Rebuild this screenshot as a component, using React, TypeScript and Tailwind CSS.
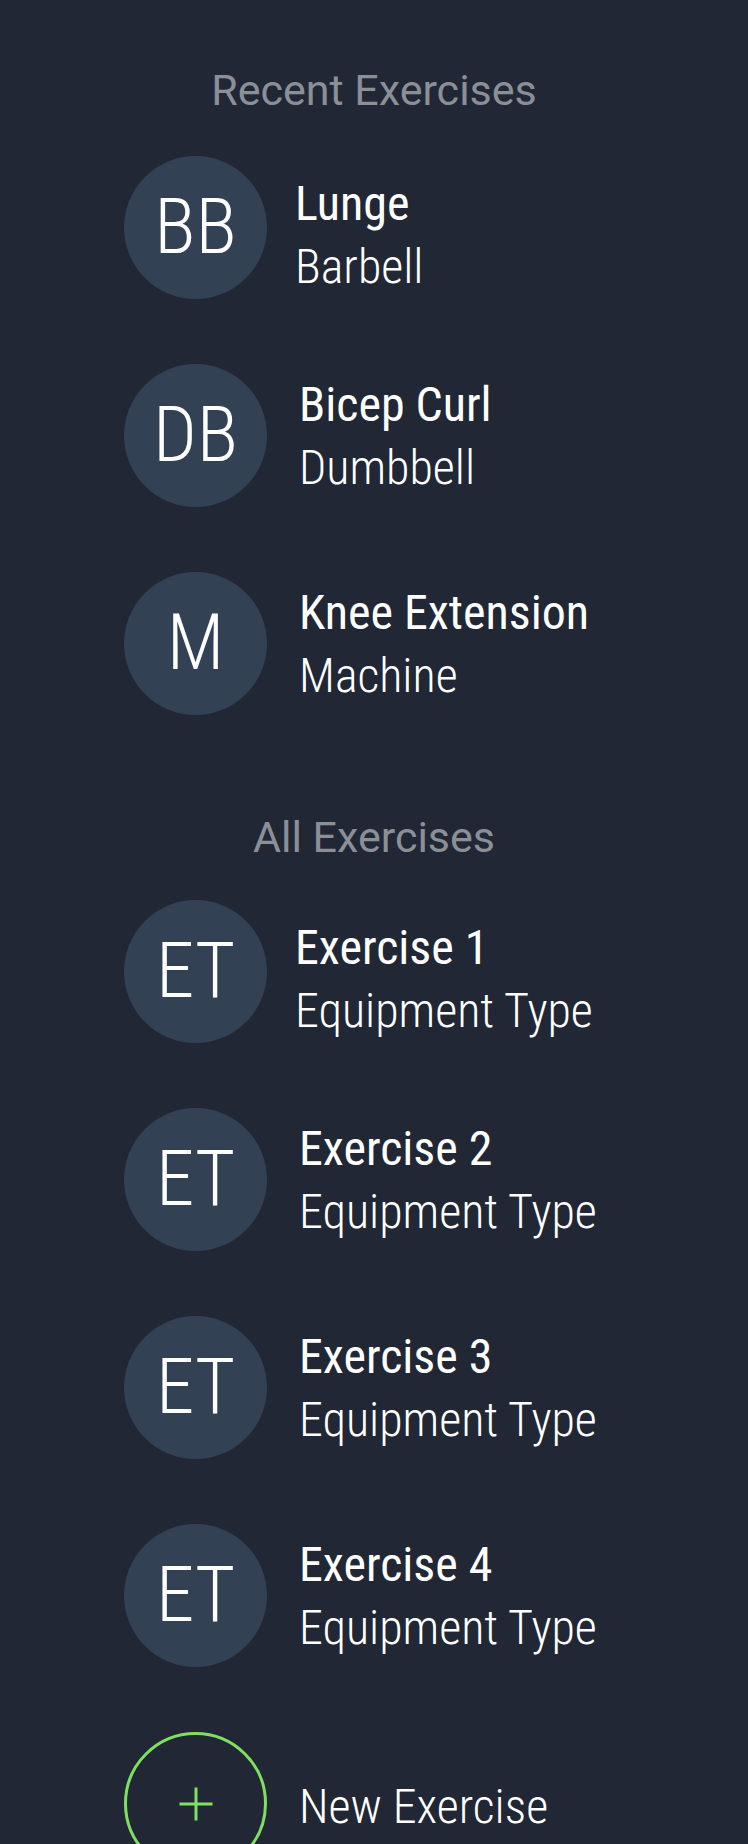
import React from "react";

type Item = { initials: string; name: string; sub: string; first?: boolean };

const recent: Item[] = [
  { initials: "BB", name: "Lunge", sub: "Barbell", first: true },
  { initials: "DB", name: "Bicep Curl", sub: "Dumbbell" },
  { initials: "M", name: "Knee Extension", sub: "Machine" },
];

const all: Item[] = [
  { initials: "ET", name: "Exercise 1", sub: "Equipment Type", first: true },
  { initials: "ET", name: "Exercise 2", sub: "Equipment Type" },
  { initials: "ET", name: "Exercise 3", sub: "Equipment Type" },
  { initials: "ET", name: "Exercise 4", sub: "Equipment Type" },
];

const font = { fontFamily: '"Roboto Condensed", Roboto, "Liberation Sans", sans-serif' };
const headFont = { fontFamily: 'Roboto, "Liberation Sans", sans-serif' };

function Row({ item }: { item: Item }) {
  return (
    <div className="flex h-[143px] items-start">
      <div className="flex h-[143px] w-[143px] shrink-0 items-center justify-center rounded-full bg-[#334155]">
        <span className="text-[77px] leading-none font-light text-white">{item.initials}</span>
      </div>
      <div
        className={
          item.first
            ? "ml-[28px] pt-[16px] flex flex-col text-white"
            : "ml-[32px] pt-[9px] flex flex-col text-white"
        }
      >
        <span className="text-[48px] leading-[63px] font-normal">{item.name}</span>
        <span className="text-[48px] leading-[63px] font-light">{item.sub}</span>
      </div>
    </div>
  );
}

export default function App() {
  return (
    <div className="min-h-[1844px] w-full overflow-hidden bg-[#212734]" style={font}>
      <div className="flex flex-col pt-[69px]">
        <h2
          className="h-[43px] text-center text-[43px] leading-[43px] font-normal text-[#8a8f98]"
          style={headFont}
        >
          Recent Exercises
        </h2>
        <div className="mt-[44px] flex flex-col gap-[65px] pl-[124px]">
          {recent.map((it) => (
            <Row key={it.name} item={it} />
          ))}
        </div>
        <h2
          className="mt-[101px] h-[43px] text-center text-[43px] leading-[43px] font-normal text-[#8a8f98]"
          style={headFont}
        >
          All Exercises
        </h2>
        <div className="mt-[41px] flex flex-col gap-[65px] pl-[124px]">
          {all.map((it) => (
            <Row key={it.name} item={it} />
          ))}
          <div className="flex h-[143px] items-center">
            <div className="flex h-[143px] w-[143px] shrink-0 items-center justify-center rounded-full border-[3px] border-[#7fe05f]">
              <svg width="36" height="36" viewBox="0 0 36 36">
                <path d="M18 1.5V34.5M1.5 18H34.5" stroke="#7fe05f" strokeWidth="3" />
              </svg>
            </div>
            <span className="ml-[32px] mt-[6px] text-[48px] font-light text-white">New Exercise</span>
          </div>
        </div>
      </div>
    </div>
  );
}
